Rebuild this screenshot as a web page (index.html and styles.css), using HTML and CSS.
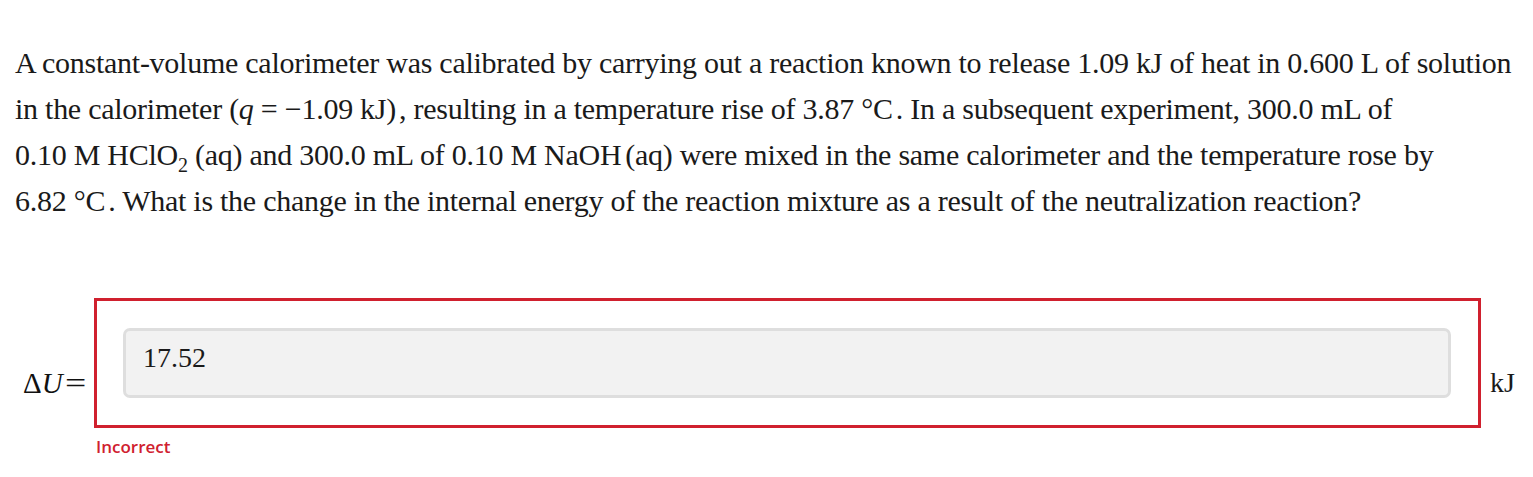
FILE: index.html
```html
<!DOCTYPE html>
<html>
<head>
<meta charset="utf-8">
<link rel="stylesheet" href="styles.css">
</head>
<body>
<div class="page">
  <p class="question">A constant-volume calorimeter was calibrated by carrying out a reaction known to release 1.09 kJ of heat in 0.600 L of solution<br>in the calorimeter (<i>q</i> = −1.09 kJ)<span class="gap">,</span> resulting in a temperature rise of 3.87 °C<span class="gap">.</span> In a subsequent experiment, 300.0 mL of<br>0.10 M HClO<sub>2</sub> (aq) and 300.0 mL of 0.10 M NaOH<span class="thin">(aq)</span> were mixed in the same calorimeter and the temperature rose by<br>6.82 °C<span class="gap">.</span> What is the change in the internal energy of the reaction mixture as a result of the neutralization reaction?</p>
  <div class="answer">
    <div class="label">Δ<i>U</i><span class="eq">=</span></div>
    <div class="field">
      <div class="box">
        <div class="input">17.52</div>
      </div>
      <div class="feedback">Incorrect</div>
    </div>
    <div class="unit">kJ</div>
  </div>
</div>
</body>
</html>
```
FILE: styles.css
```css
html, body {
  margin: 0;
  padding: 0;
  background: #ffffff;
}
.page {
  padding: 40px 0 0 15px;
  font-family: "Liberation Serif", "Times New Roman", serif;
  color: #1a1a1a;
}
.question {
  margin: 0;
  width: 1518px;
  white-space: nowrap;
  font-size: 30px;
  line-height: 46px;
  letter-spacing: -0.26px;
}
.question .gap {
  margin-left: 3px;
}
.question .thin {
  margin-left: 4px;
}
.question sub {
  font-size: 20px;
  line-height: 0;
  vertical-align: -7px;
}
.answer {
  display: flex;
  align-items: flex-start;
  margin-top: 74px;
}
.label {
  width: 79px;
  padding-left: 8px;
  box-sizing: border-box;
  margin-top: 70px;
  font-size: 29px;
  line-height: 30px;
  color: #111;
}
.label .eq {
  margin-left: 2px;
  display: inline-block;
  transform: scaleX(1.3);
  transform-origin: left center;
}
.field {
  display: flex;
  flex-direction: column;
}
.box {
  width: 1387px;
  height: 130px;
  box-sizing: border-box;
  border: 3px solid #d0202e;
  padding: 27px 27px 27px 26px;
}
.input {
  height: 70px;
  box-sizing: border-box;
  background: #f2f2f2;
  border: 3px solid #dedede;
  border-radius: 7px;
  padding: 11px 0 0 17px;
  font-size: 28px;
  line-height: 32px;
}
.feedback {
  margin-top: 8px;
  padding-left: 2px;
  font-family: "Open Sans", "Noto Sans", sans-serif;
  font-weight: 600;
  font-size: 17px;
  line-height: 22px;
  color: #d0202e;
}
.unit {
  margin-left: 9px;
  margin-top: 70px;
  font-size: 28px;
  line-height: 30px;
}
```
